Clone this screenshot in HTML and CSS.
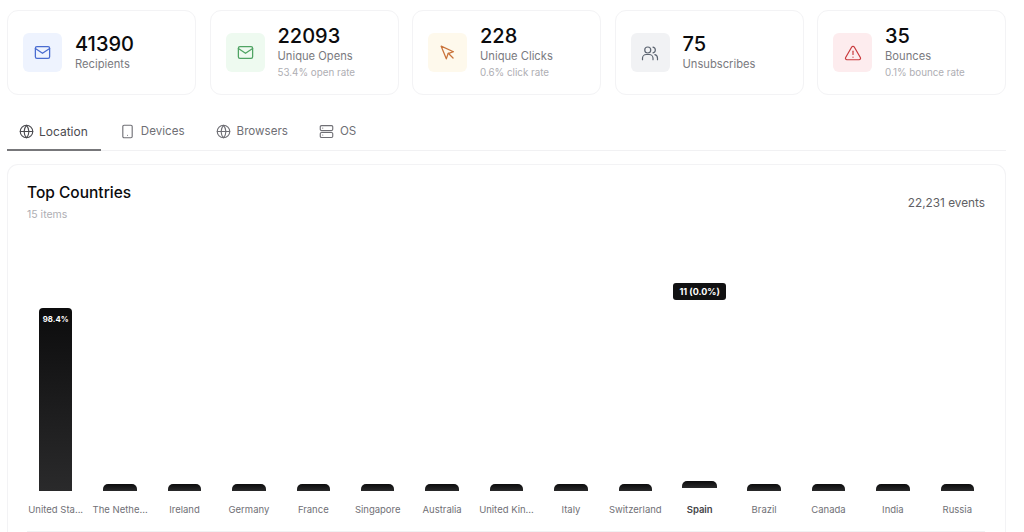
FILE: index.html
```html
<!DOCTYPE html>
<html lang="en">
<head>
    <meta charset="UTF-8">
    <title>Campaign stats</title>
    <link rel="stylesheet" href="styles.css">
</head>
<body>
    <div class="page">
        <div class="stats">
            <div class="stat">
                <div class="stat-icon blue">
                    <svg viewBox="0 0 24 24"><rect x="3" y="4.500" width="18" height="15" rx="2"/><path d="M3 7l9 6 9-6"/></svg>
                </div>
                <div class="stat-text">
                    <div class="stat-value">41390</div>
                    <div class="stat-label">Recipients</div>
                </div>
            </div>
            <div class="stat">
                <div class="stat-icon green">
                    <svg viewBox="0 0 24 24"><rect x="3" y="4.500" width="18" height="15" rx="2"/><path d="M3 7l9 6 9-6"/></svg>
                </div>
                <div class="stat-text">
                    <div class="stat-value">22093</div>
                    <div class="stat-label">Unique Opens</div>
                    <div class="stat-note">53.4% open rate</div>
                </div>
            </div>
            <div class="stat">
                <div class="stat-icon orange">
                    <svg viewBox="0 0 24 24"><path d="M4 4l6.500 16 2.300-6.700L19.500 11z"/><path d="M13 13l6 6"/></svg>
                </div>
                <div class="stat-text">
                    <div class="stat-value">228</div>
                    <div class="stat-label">Unique Clicks</div>
                    <div class="stat-note">0.6% click rate</div>
                </div>
            </div>
            <div class="stat">
                <div class="stat-icon gray">
                    <svg class="small" viewBox="0 0 24 24"><circle cx="9" cy="8" r="4"/><path d="M2 21v-2a5 5 0 0 1 5-5h4a5 5 0 0 1 5 5v2"/><path d="M16 4.100a4 4 0 0 1 0 7.800"/><path d="M22 21v-2a5 5 0 0 0-3.500-4.800"/></svg>
                </div>
                <div class="stat-text">
                    <div class="stat-value">75</div>
                    <div class="stat-label">Unsubscribes</div>
                </div>
            </div>
            <div class="stat">
                <div class="stat-icon red">
                    <svg class="small" viewBox="0 0 24 24"><path d="M10.300 4L2.200 18a2 2 0 0 0 1.700 3h16.200a2 2 0 0 0 1.700-3L13.700 4a2 2 0 0 0-3.400 0z"/><path d="M12 9.500v4.500"/><path d="M12 17.500v.1"/></svg>
                </div>
                <div class="stat-text">
                    <div class="stat-value">35</div>
                    <div class="stat-label">Bounces</div>
                    <div class="stat-note">0.1% bounce rate</div>
                </div>
            </div>
        </div>

        <div class="tabs">
            <div class="tab active">
                <svg viewBox="0 0 24 24"><circle cx="12" cy="12" r="10"/><path d="M2 12h20"/><path d="M12 2a15 15 0 0 1 0 20a15 15 0 0 1 0-20z"/></svg>
                Location
            </div>
            <div class="tab">
                <svg viewBox="0 0 24 24"><rect x="4.500" y="2" width="15" height="20" rx="2"/><path d="M12 18h.01"/></svg>
                Devices
            </div>
            <div class="tab">
                <svg viewBox="0 0 24 24"><circle cx="12" cy="12" r="10"/><path d="M2 12h20"/><path d="M12 2a15 15 0 0 1 0 20a15 15 0 0 1 0-20z"/></svg>
                Browsers
            </div>
            <div class="tab">
                <svg viewBox="0 0 24 24"><rect x="2" y="2.500" width="20" height="8" rx="2"/><rect x="2" y="13.500" width="20" height="8" rx="2"/><path d="M6 6.500h.01"/><path d="M6 17.500h.01"/></svg>
                OS
            </div>
        </div>

        <div class="panel">
            <div class="panel-head">
                <div>
                    <h2>Top Countries</h2>
                    <div class="panel-sub">15 items</div>
                </div>
                <div class="panel-count">22,231 events</div>
            </div>
            <div class="chart">
                <div class="col">
                    <div class="bar tall"><span>98.4%</span></div>
                    <div class="name">United Sta...</div>
                </div>
                <div class="col"><div class="bar"></div><div class="name">The Nethe...</div></div>
                <div class="col"><div class="bar"></div><div class="name">Ireland</div></div>
                <div class="col"><div class="bar"></div><div class="name">Germany</div></div>
                <div class="col"><div class="bar"></div><div class="name">France</div></div>
                <div class="col"><div class="bar"></div><div class="name">Singapore</div></div>
                <div class="col"><div class="bar"></div><div class="name">Australia</div></div>
                <div class="col"><div class="bar"></div><div class="name">United Kin...</div></div>
                <div class="col"><div class="bar"></div><div class="name">Italy</div></div>
                <div class="col"><div class="bar"></div><div class="name">Switzerland</div></div>
                <div class="col hover">
                    <div class="tip">11 (0.0%)</div>
                    <div class="bar"></div>
                    <div class="name">Spain</div>
                </div>
                <div class="col"><div class="bar"></div><div class="name">Brazil</div></div>
                <div class="col"><div class="bar"></div><div class="name">Canada</div></div>
                <div class="col"><div class="bar"></div><div class="name">India</div></div>
                <div class="col"><div class="bar"></div><div class="name">Russia</div></div>
            </div>
            <div class="panel-rule"></div>
        </div>
    </div>
</body>
</html>
```

FILE: styles.css
```css
* {
    box-sizing: border-box;
}

html, body {
    height: 532px;
    overflow: hidden;
}

body {
    margin: 0;
    background: #fff;
    color: #0b0b0d;
    font-family: Inter, "Liberation Sans", sans-serif;
}

svg {
    fill: none;
    stroke: currentColor;
    stroke-width: 1.6;
    stroke-linecap: round;
    stroke-linejoin: round;
}

.page {
    width: 1006px;
    height: 532px;
    padding: 10px 0 0 7px;
}

.stats {
    display: grid;
    grid-template-columns: repeat(5, 1fr);
    gap: 13.5px;
}

.stat {
    display: flex;
    align-items: center;
    gap: 13px;
    height: 85px;
    padding: 0 15px;
    border: 1px solid #f3f3f5;
    border-radius: 11px;
}

.stat-icon {
    display: flex;
    align-items: center;
    justify-content: center;
    width: 39px;
    height: 39px;
    border-radius: 6px;
}

.stat-icon svg {
    width: 19px;
    height: 19px;
}

.stat-icon svg.small {
    width: 18px;
    height: 18px;
}

.stat-text {
    margin-bottom: 1px;
}

.blue { background: #eef3fe; color: #4a6cd0; }
.green { background: #eefaf0; color: #4fa463; }
.orange { background: #fef9ec; color: #c9733a; }
.gray { background: #f1f2f4; color: #5c6470; }
.red { background: #fdecee; color: #c9393c; }

.stat-value {
    font-size: 20px;
    font-weight: 500;
    line-height: 24px;
}

.stat-label {
    font-size: 11.2px;
    line-height: 16px;
    color: #7a7a80;
}

.stat-note {
    margin-top: 1px;
    font-size: 9.8px;
    line-height: 15px;
    color: #aeaeb3;
}

.tabs {
    display: flex;
    height: 41px;
    margin-top: 15px;
    border-bottom: 1px solid #f1f1f3;
}

.tab {
    display: flex;
    align-items: center;
    gap: 6px;
    padding: 1px 12px 0;
    margin-right: 7px;
    margin-bottom: -1px;
    font-size: 11.6px;
    color: #6f6f75;
}

.tab svg {
    width: 15px;
    height: 15px;
    stroke-width: 1.8;
}

.tab.active {
    gap: 5px;
    padding: 3px 13px 0 12px;
    font-size: 12px;
    color: #4a4a4f;
    border-bottom: 2px solid #77777a;
}

.panel {
    height: 368px;
    margin-top: 13px;
    padding: 0 20px 0 19px;
    border: 1px solid #f3f3f5;
    border-bottom: none;
    border-radius: 11px 11px 0 0;
}

.panel-head {
    display: flex;
    justify-content: space-between;
    align-items: center;
    padding-top: 18px;
    height: 58px;
}

h2 {
    margin: -2px 0 0;
    font-size: 15.5px;
    font-weight: 500;
    line-height: 20px;
}

.panel-sub {
    margin-top: 5px;
    font-size: 10.5px;
    color: #aeaeb3;
}

.panel-count {
    font-size: 11.8px;
    color: #5f5f65;
}

.chart {
    display: grid;
    grid-template-columns: repeat(15, 1fr);
    align-items: end;
    height: 300px;
    margin: 0 -4.5px 0 -3.5px;
}

.col {
    position: relative;
    display: flex;
    flex-direction: column;
    align-items: center;
    justify-content: flex-end;
}

.bar {
    width: 33.5px;
    height: 7px;
    border-radius: 5px 5px 0 0;
    background: linear-gradient(#0c0c0d, #2a2a2b);
}

.bar.tall {
    height: 183px;
    padding-top: 6px;
    border-radius: 4px 4px 0 0;
    text-align: center;
    font-size: 7.8px;
    font-weight: 700;
    color: #fff;
}

.name {
    height: 19px;
    margin-top: 13px;
    font-size: 9.5px;
    line-height: 12px;
    white-space: nowrap;
    color: #707076;
}

.hover .bar {
    width: 35px;
}

.hover .name {
    margin-top: 16px;
    font-weight: 600;
    color: #444448;
}

.tip {
    position: absolute;
    bottom: 223px;
    padding: 0 6px;
    height: 17px;
    line-height: 17px;
    border-radius: 3px;
    background: #111112;
    color: #fff;
    font-size: 9px;
    font-weight: 700;
    white-space: nowrap;
}

.panel-rule {
    height: 1px;
    margin-top: 8px;
    background: #f1f1f3;
}
```
